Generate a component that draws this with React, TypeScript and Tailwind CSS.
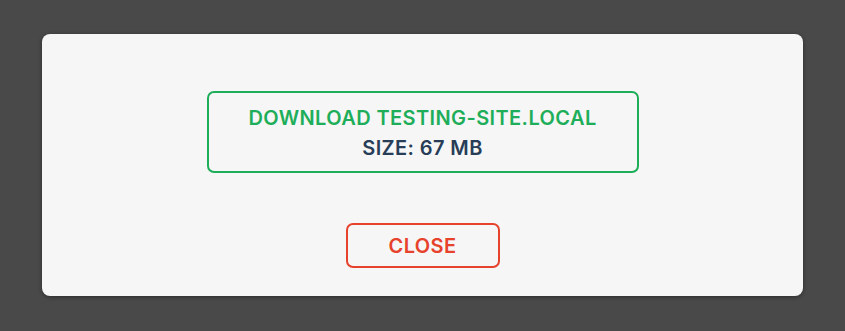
import React from "react";

export default function App() {
  return (
    <div
      className="w-[845px] h-[331px] bg-[#494949] flex items-start justify-center pt-[34px]"
      style={{ fontFamily: "Inter, 'Liberation Sans', sans-serif" }}
    >
      <div className="w-[761px] h-[262px] bg-[#f6f6f6] rounded-[8px] shadow-[0_1px_4px_rgba(0,0,0,0.4)] flex flex-col items-center pt-[57px]">
        <button className="w-[432px] h-[82px] border-2 border-[#1eae5a] rounded-[7px] flex flex-col items-center justify-center gap-[6px] pt-[2px]">
          <span className="text-[20px] leading-[24px] font-semibold text-[#1eae5a] tracking-[0.4px]">
            DOWNLOAD TESTING-SITE.LOCAL
          </span>
          <span className="text-[20px] leading-[24px] font-semibold text-[#283d57] tracking-[0.4px]">
            SIZE: 67 MB
          </span>
        </button>
        <button className="mt-[50px] w-[154px] h-[45px] border-2 border-[#e6422c] rounded-[7px] flex items-center justify-center text-[20px] font-semibold text-[#e6422c] tracking-[0.4px] pt-[1px]">
          CLOSE
        </button>
      </div>
    </div>
  );
}
